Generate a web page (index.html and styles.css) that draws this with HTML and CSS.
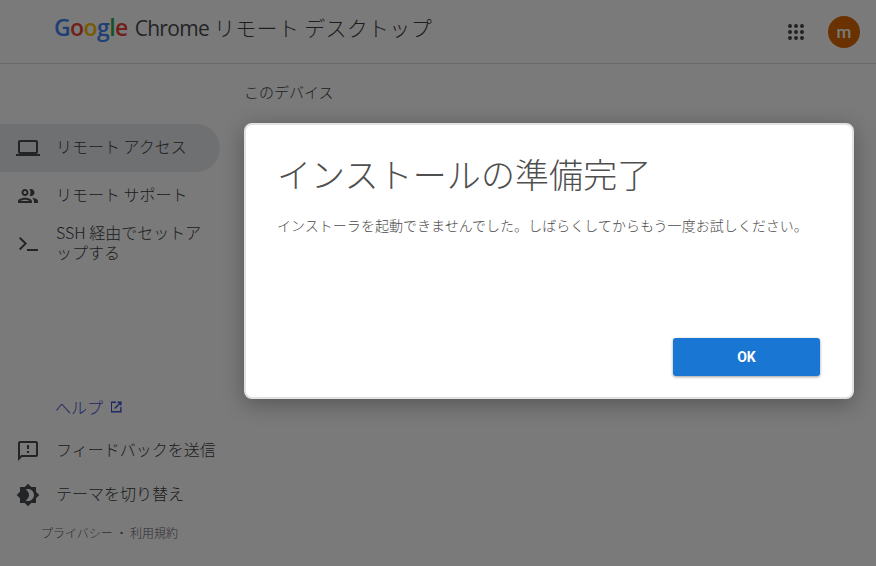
FILE: index.html
```html
<!DOCTYPE html>
<html lang="ja">
<head>
<meta charset="utf-8">
<title>Chrome リモート デスクトップ</title>
<link rel="stylesheet" href="styles.css">
</head>
<body>
<div class="app">
  <header class="header">
    <div class="logo">
      <span class="google"><span class="g-blue">G</span><span class="g-red">o</span><span class="g-yellow">o</span><span class="g-blue">g</span><span class="g-green">l</span><span class="g-red">e</span></span>
      <span class="chrome">Chrome</span>
      <span class="product">リモート デスクトップ</span>
    </div>
    <div class="header-actions">
      <svg class="apps" width="18" height="18" viewBox="0 0 18 18"><g fill="#4a4a4a">
        <circle cx="3" cy="3" r="2"/><circle cx="9" cy="3" r="2"/><circle cx="15" cy="3" r="2"/>
        <circle cx="3" cy="9" r="2"/><circle cx="9" cy="9" r="2"/><circle cx="15" cy="9" r="2"/>
        <circle cx="3" cy="15" r="2"/><circle cx="9" cy="15" r="2"/><circle cx="15" cy="15" r="2"/></g></svg>
      <div class="avatar">m</div>
    </div>
  </header>
  <div class="main">
    <nav class="sidebar">
      <div class="nav-top">
        <div class="nav-item active">
          <svg class="icon" viewBox="0 0 24 24"><path d="M20 18c1.100 0 2-.9 2-2V6c0-1.100-.9-2-2-2H4c-1.100 0-2 .9-2 2v10c0 1.100.9 2 2 2H0v2h24v-2h-4zM4 6h16v10H4V6z"/></svg>
          <span>リモート アクセス</span>
        </div>
        <div class="nav-item">
          <svg class="icon" viewBox="0 0 24 24"><path d="M9 13.750c-2.340 0-7 1.170-7 3.500V19h14v-1.750c0-2.330-4.660-3.500-7-3.500zM4.340 17c.84-.58 2.870-1.250 4.660-1.250s3.820.67 4.660 1.250H4.340zM9 12c1.930 0 3.500-1.570 3.500-3.500S10.930 5 9 5 5.500 6.570 5.500 8.500 7.070 12 9 12zm0-5c.83 0 1.500.67 1.500 1.500S9.830 10 9 10s-1.500-.67-1.500-1.500S8.170 7 9 7zm7.040 6.810c1.160.84 1.960 1.960 1.960 3.440V19h4v-1.750c0-2.020-3.500-3.170-5.960-3.440zM15 12c1.930 0 3.500-1.570 3.500-3.500S16.930 5 15 5c-.54 0-1.040.13-1.500.35.63.89 1 1.980 1 3.150s-.37 2.260-1 3.150c.46.22.96.350 1.500.350z"/></svg>
          <span>リモート サポート</span>
        </div>
        <div class="nav-item multi">
          <svg class="icon" viewBox="0 0 24 24"><path d="M3 6.400 4.400 5l6.600 6.600-6.600 6.600L3 16.800l5.200-5.200z"/><rect x="11" y="17" width="11" height="2"/></svg>
          <span>SSH 経由でセットアップする</span>
        </div>
      </div>
      <div class="nav-bottom">
        <div class="help">ヘルプ
          <svg class="ext" viewBox="0 0 14 14"><path d="M2 1.500h5v1.400H3v8.200h8.200V7h1.400v5.500H2zM8.500 1.500h4.100v4.100h-1.400V3.900L6.200 8.900l-1-1 5-5H8.500z"/></svg>
        </div>
        <div class="nav-item small">
          <svg class="icon" viewBox="0 0 24 24"><path d="M20 2H4c-1.100 0-2 .9-2 2v18l4-4h14c1.100 0 2-.9 2-2V4c0-1.100-.9-2-2-2zm0 14H5.170L4 17.170V4h16v12zM11 12h2v2h-2zm0-6h2v4h-2z"/></svg>
          <span>フィードバックを送信</span>
        </div>
        <div class="nav-item small">
          <svg class="icon" viewBox="0 0 24 24"><path d="M20 8.690V4h-4.690L12 .69 8.690 4H4v4.690L.69 12 4 15.310V20h4.690L12 23.310 15.310 20H20v-4.690L23.310 12 20 8.690zM12 18c-.89 0-1.740-.2-2.500-.55C11.560 16.500 13 14.420 13 12s-1.440-4.500-3.500-5.450C10.260 6.200 11.110 6 12 6c3.310 0 6 2.690 6 6s-2.690 6-6 6z"/></svg>
          <span>テーマを切り替え</span>
        </div>
        <div class="legal">プライバシー ・ 利用規約</div>
      </div>
    </nav>
    <main class="content">
      <h2 class="section">このデバイス</h2>
    </main>
  </div>
  <div class="scrim"></div>
  <div class="dialog">
    <h1 class="dialog-title">インストールの準備完了</h1>
    <p class="dialog-body">インストーラを起動できませんでした。しばらくしてからもう一度お試しください。</p>
    <div class="dialog-actions"><button class="ok">OK</button></div>
  </div>
</div>
</body>
</html>
```
FILE: styles.css
```css
* { box-sizing: border-box; }
html, body { margin: 0; height: 100%; }
body { font-family: "Noto Sans CJK JP", "Roboto", sans-serif; background: #fff; color: #3c4043; overflow: hidden; }
.app { position: relative; width: 876px; height: 566px; display: flex; flex-direction: column; }
.header { height: 64px; flex: none; display: flex; align-items: center; justify-content: space-between; padding: 0 16px 10px 54px; border-bottom: 1px solid #dadce0; }
.logo { display: flex; align-items: baseline; white-space: nowrap; }
.google { font-family: "Open Sans", sans-serif; font-size: 23px; font-weight: 600; letter-spacing: -0.6px; margin-right: 7px; }
.g-blue { color: #4285f4; } .g-red { color: #ea4335; } .g-yellow { color: #fbbc05; } .g-green { color: #34a853; }
.chrome { font-family: "Open Sans", sans-serif; font-size: 21px; color: #4a4d50; margin-right: 5px; letter-spacing: -0.7px; }
.product { font-size: 21px; font-weight: 300; color: #3c4043; letter-spacing: 0.3px; }
.header-actions { display: flex; align-items: center; gap: 23px; padding-top: 10px; }
.avatar { width: 32px; height: 32px; border-radius: 50%; background: #dc6a00; color: #fff; display: flex; align-items: center; justify-content: center; font: 500 17px "Roboto", sans-serif; }
.main { flex: 1; display: flex; min-height: 0; }
.sidebar { width: 220px; flex: none; display: flex; flex-direction: column; justify-content: space-between; padding: 60px 0 24px; }
.nav-item { display: flex; align-items: center; gap: 16px; min-height: 48px; padding-left: 16px; padding-right: 12px; font-size: 16px; font-weight: 300; color: #3c4043; line-height: 20px; }
.nav-item span { margin-bottom: 4px; }
.nav-item.active { background: #e8eaed; border-radius: 0 24px 24px 0; }
.nav-item.small { min-height: 44px; padding-right: 0; }
.icon { width: 24px; height: 24px; flex: none; fill: #4a4d50; }
.help { padding-left: 55px; font-size: 16px; font-weight: 300; color: #3f51d5; line-height: 24px; display: flex; align-items: center; gap: 6px; margin-bottom: 10px; }
.ext { width: 14px; height: 14px; fill: #3f51d5; }
.legal { padding-left: 41px; font-size: 12px; font-weight: 300; color: #5f6368; margin-top: 7px; line-height: 18px; }
.content { flex: 1; padding: 15px 0 0 24px; }
.section { margin: 0; font-size: 15px; font-weight: 300; line-height: 26px; color: #3c4043; }
.scrim { position: absolute; inset: 0; background: rgba(0,0,0,.52); }
.dialog { position: absolute; left: 244px; top: 123px; width: 610px; height: 276px; background: #fff; border: 2px solid #e2e2e2; border-radius: 8px; box-shadow: 0 5px 22px rgba(0,0,0,.3); padding: 24px 32px 21px 31px; display: flex; flex-direction: column; }
.dialog-title { margin: 0; font-size: 34px; font-weight: 300; line-height: 50px; color: #4f4f4f; white-space: nowrap; letter-spacing: 0.1px; }
.dialog-body { margin: 16px 0 0; font-size: 14px; font-weight: 300; line-height: 20px; color: #4a4a4a; white-space: nowrap; letter-spacing: 0.03px; }
.dialog-actions { margin-top: auto; display: flex; justify-content: flex-end; }
.ok { width: 147px; height: 38px; border: 0; border-radius: 3px; background: #1976d2; color: #fff; font: 700 14px "Roboto", sans-serif; box-shadow: 0 1px 3px rgba(0,0,0,.4); }
```
